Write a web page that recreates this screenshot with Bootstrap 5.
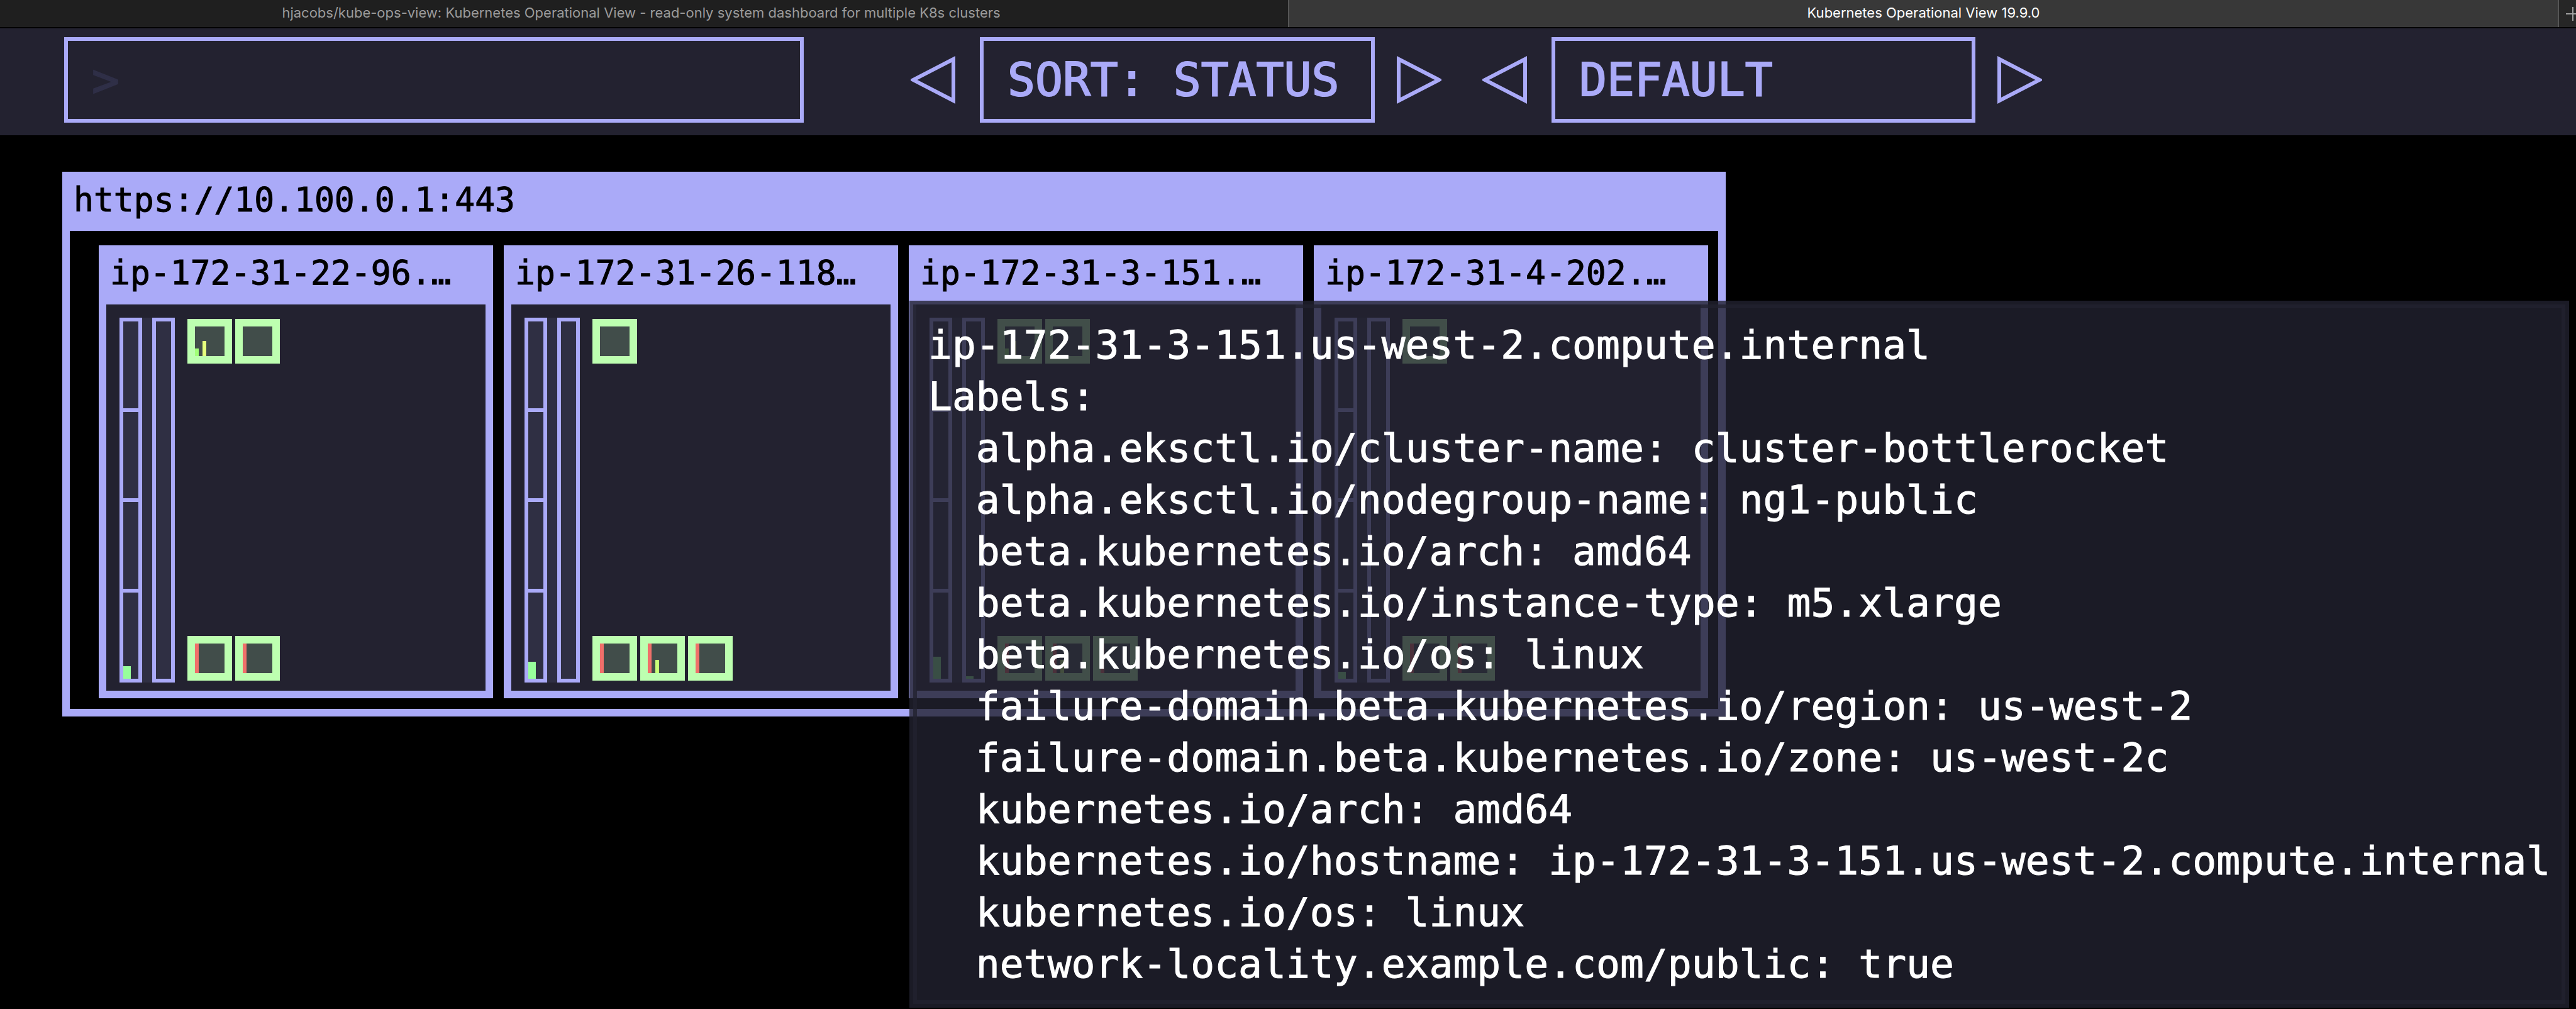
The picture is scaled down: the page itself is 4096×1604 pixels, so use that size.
<!DOCTYPE html>
<html lang="en">
<head>
<meta charset="utf-8">
<meta name="viewport" content="width=device-width, initial-scale=1">
<title>Kubernetes Operational View 19.9.0</title>
<link href="https://cdn.jsdelivr.net/npm/bootstrap@5.3.0/dist/css/bootstrap.min.css" rel="stylesheet">
<style>
  :root { --primary: #aaaaf8; --panel: #232230; --shade: #2f2f43; --pod: #bdffb0; }
  body { background: #000; font-family: "DejaVu Sans Mono", monospace; color: #fff; }

  .tabstrip { height: 45px; background: #1f1f1f; border-bottom: 2px solid #000; font: 22px/40px Inter, sans-serif; overflow: hidden; }
  .tabstrip a { color: #9b9b9b; text-decoration: none; white-space: nowrap; text-align: center; }
  .tab-back { width: 50%; padding-right: 9px; }
  .tabstrip .tab-front { color: #fff; background: #383838; border-left: 2px solid #555; border-right: 2px solid #555; }
  .tab-new { width: 27px; border: 0; padding: 0 0 0 10px; background: #262626; overflow: hidden; line-height: 0; text-align: left; }

  .toolbar { background: var(--panel); padding: 14px 102px 20px; }
  .toolbar .field { height: 136px; border: 6px solid var(--primary); border-radius: 0; background: var(--panel); color: var(--primary); font-size: 73px; line-height: 88px; padding: 0 38px; text-align: left; -webkit-text-stroke: 2px currentColor; }
  .toolbar .field::placeholder { color: #2f2f47; opacity: 1; }
  .search { width: 1176px; margin-right: 170px; }
  .picker { gap: 34px; margin-right: 65px; }
  .sorter { width: 628px; }
  .theme { width: 674px; }
  .arrow { border: 0; background: none; padding: 0; line-height: 0; }

  .cluster { margin: 58px 99px 0; width: 2645px; background: var(--primary); padding: 0 12px 12px; }
  .caption { color: #000; font-size: 53px; line-height: 1; white-space: nowrap; margin: 0; font-weight: 400; -webkit-text-stroke: 1px currentColor; }
  .cluster > .caption { padding: 18px 6px 23px; }
  .nodes { background: #000; padding: 23px 16px 17px 46px; gap: 17px; }
  .node { flex: 1 1 0; min-width: 0; background: var(--primary); padding: 0 12px 12px; position: relative; }
  .node > .caption { padding: 17px 6px 24px; }
  .node-body { background: var(--panel); padding: 21px 21px 13px; gap: 20px; }
  .meters { background: var(--shade); gap: 16px; height: 580px; }
  .meter { width: 36px; border: 6px solid var(--primary); }
  .core { border-bottom: 6px solid var(--primary); flex: 1 1 0; }
  .core:last-child { border-bottom: 0; }
  .level { width: 12px; background: #97ff9b; }
  .pods { padding: 2px 0 3px; }
  .pod-row { gap: 5px; }
  .pod { width: 71px; height: 71px; border: 12px solid var(--pod); background: #414d4a; gap: 6px; }
  .use { width: 6px; }
  .low { background: #a2ff78; } .mid { background: #e6ff7d; } .fair { background: #c8ff78; } .high { background: #f0706a; }

  .tip { position: absolute; left: 1px; top: 88px; z-index: 5; margin: 0; border: 6px solid transparent; background: rgba(34,34,48,.8) border-box; box-shadow: inset 0 0 0 6px rgba(34,34,48,.8); padding: 24px 24px 22px; font: 63px/82px "DejaVu Sans Mono", monospace; color: #fff; white-space: pre; overflow: visible; -webkit-text-stroke: 1px currentColor; }
</style>
<script src="https://cdn.jsdelivr.net/npm/bootstrap@5.3.0/dist/js/bootstrap.bundle.min.js"></script>
</head>
<body class="min-vh-100">
<nav class="tabstrip d-flex" aria-label="Browser tabs">
  <a class="tab-back" href="#">hjacobs/kube-ops-view: Kubernetes Operational View - read-only system dashboard for multiple K8s clusters</a>
  <a class="tab-front flex-fill" href="#">Kubernetes Operational View 19.9.0</a>
  <button class="tab-new" type="button" aria-label="New tab"><svg width="24" height="24" viewBox="0 0 24 24"><path d="M12 1v22M1 12h22" stroke="#a0a0a0" stroke-width="2"/></svg></button>
</nav>

<header class="toolbar d-flex align-items-center">
  <div class="search">
    <input class="field w-100 d-block" type="text" aria-label="Filter" placeholder="&gt;">
  </div>
  <div class="picker d-flex align-items-center">
    <button class="arrow" type="button" aria-label="Previous sort"><svg width="76" height="78" viewBox="0 0 76 78"><path d="M68 6V72L4 39Z" fill="none" stroke="#aaaaf8" stroke-width="6"/></svg></button>
    <button class="field sorter" type="button">SORT: STATUS</button>
    <button class="arrow" type="button" aria-label="Next sort"><svg width="72" height="78" viewBox="0 0 72 78"><path d="M4 6V72L68 39Z" fill="none" stroke="#aaaaf8" stroke-width="6"/></svg></button>
  </div>
  <div class="picker d-flex align-items-center">
    <button class="arrow" type="button" aria-label="Previous theme"><svg width="76" height="78" viewBox="0 0 76 78"><path d="M68 6V72L4 39Z" fill="none" stroke="#aaaaf8" stroke-width="6"/></svg></button>
    <button class="field theme" type="button">DEFAULT</button>
    <button class="arrow" type="button" aria-label="Next theme"><svg width="72" height="78" viewBox="0 0 72 78"><path d="M4 6V72L68 39Z" fill="none" stroke="#aaaaf8" stroke-width="6"/></svg></button>
  </div>
</header>

<main>
  <section class="cluster">
    <h1 class="caption">https://10.100.0.1:443</h1>
    <div class="nodes d-flex">

      <article class="node">
        <h2 class="caption">ip-172-31-22-96.…</h2>
        <div class="node-body d-flex">
          <div class="meters d-flex">
            <div class="meter d-flex flex-column"><div class="core"></div><div class="core"></div><div class="core"></div><div class="core d-flex align-items-end"><div class="level" style="height:20px"></div></div></div>
            <div class="meter"></div>
          </div>
          <div class="pods d-flex flex-column justify-content-between">
            <div class="pod-row d-flex">
              <div class="pod d-flex align-items-end"><div class="use low" style="height:12px"></div><div class="use mid" style="height:24px"></div></div>
              <div class="pod"></div>
            </div>
            <div class="pod-row d-flex">
              <div class="pod d-flex align-items-end"><div class="use high" style="height:100%"></div></div>
              <div class="pod d-flex align-items-end"><div class="use high" style="height:100%"></div></div>
            </div>
          </div>
        </div>
      </article>

      <article class="node">
        <h2 class="caption">ip-172-31-26-118…</h2>
        <div class="node-body d-flex">
          <div class="meters d-flex">
            <div class="meter d-flex flex-column"><div class="core"></div><div class="core"></div><div class="core"></div><div class="core d-flex align-items-end"><div class="level" style="height:27px"></div></div></div>
            <div class="meter"></div>
          </div>
          <div class="pods d-flex flex-column justify-content-between">
            <div class="pod-row d-flex">
              <div class="pod"></div>
            </div>
            <div class="pod-row d-flex">
              <div class="pod d-flex align-items-end"><div class="use high" style="height:100%"></div></div>
              <div class="pod d-flex align-items-end"><div class="use high" style="height:100%"></div><div class="use fair" style="height:21px"></div></div>
              <div class="pod d-flex align-items-end"><div class="use high" style="height:100%"></div></div>
            </div>
          </div>
        </div>
      </article>

      <article class="node">
        <h2 class="caption">ip-172-31-3-151.…</h2>
        <div class="node-body d-flex">
          <div class="meters d-flex">
            <div class="meter d-flex flex-column"><div class="core"></div><div class="core"></div><div class="core"></div><div class="core d-flex align-items-end"><div class="level" style="height:35px"></div></div></div>
            <div class="meter d-flex align-items-end"><div class="level" style="height:4px"></div></div>
          </div>
          <div class="pods d-flex flex-column justify-content-between">
            <div class="pod-row d-flex">
              <div class="pod d-flex align-items-end"><div class="use low" style="height:12px"></div><div class="use mid" style="height:24px"></div></div>
              <div class="pod"></div>
            </div>
            <div class="pod-row d-flex">
              <div class="pod d-flex align-items-end"><div class="use high" style="height:100%"></div></div>
              <div class="pod d-flex align-items-end"><div class="use high" style="height:100%"></div><div class="use fair" style="height:21px"></div></div>
              <div class="pod d-flex align-items-end"><div class="use high" style="height:100%"></div></div>
            </div>
          </div>
        </div>
        <pre class="tip" role="tooltip">ip-172-31-3-151.us-west-2.compute.internal
Labels:
  alpha.eksctl.io/cluster-name: cluster-bottlerocket
  alpha.eksctl.io/nodegroup-name: ng1-public
  beta.kubernetes.io/arch: amd64
  beta.kubernetes.io/instance-type: m5.xlarge
  beta.kubernetes.io/os: linux
  failure-domain.beta.kubernetes.io/region: us-west-2
  failure-domain.beta.kubernetes.io/zone: us-west-2c
  kubernetes.io/arch: amd64
  kubernetes.io/hostname: ip-172-31-3-151.us-west-2.compute.internal
  kubernetes.io/os: linux
  network-locality.example.com/public: true</pre>
      </article>

      <article class="node">
        <h2 class="caption">ip-172-31-4-202.…</h2>
        <div class="node-body d-flex">
          <div class="meters d-flex">
            <div class="meter d-flex flex-column"><div class="core"></div><div class="core"></div><div class="core"></div><div class="core d-flex align-items-end"><div class="level" style="height:11px"></div></div></div>
            <div class="meter"></div>
          </div>
          <div class="pods d-flex flex-column justify-content-between">
            <div class="pod-row d-flex">
              <div class="pod"></div>
            </div>
            <div class="pod-row d-flex">
              <div class="pod d-flex align-items-end"><div class="use high" style="height:100%"></div></div>
              <div class="pod d-flex align-items-end"><div class="use high" style="height:100%"></div></div>
            </div>
          </div>
        </div>
      </article>

    </div>
  </section>
</main>
</body>
</html>
